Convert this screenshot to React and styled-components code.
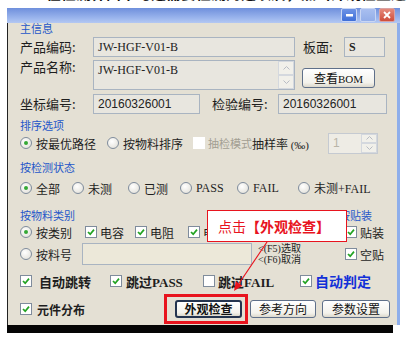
import styled, { createGlobalStyle } from 'styled-components';

const GlobalStyle = createGlobalStyle`
  html, body { margin: 0; padding: 0; background: #fff; }
  body { font-family: "Noto Sans CJK SC", "Liberation Sans", sans-serif; }
`;

const Page = styled.div`
  width: 406px;
  height: 339px;
  overflow: hidden;
  background: #fff;
`;

const TopStrip = styled.div`
  height: 8px;
  overflow: hidden;
  padding-left: 46px;
`;

const CutText = styled.div`
  margin-top: -15px;
  font-size: 15px;
  line-height: 16px;
  font-weight: 700;
  color: #111;
  white-space: nowrap;
`;

const Window = styled.div`
  margin-left: 7px;
  width: 393px;
`;

const TitleBar = styled.div`
  height: 15px;
  background: linear-gradient(#6e8fdc, #9db7ee 70%, #b4c8f2);
  display: flex;
  justify-content: flex-end;
  align-items: flex-start;
  gap: 3px;
  padding-right: 5px;
`;

const WinButton = styled.div`
  width: 16px;
  height: 14px;
  box-sizing: border-box;
  border-radius: 2px;
  border: 1px solid ${p => (p.$kind === 'close' ? '#d9a3a3' : '#c9d6f3')};
  background: ${p =>
    p.$kind === 'close'
      ? 'linear-gradient(#e58a7c, #cf4d3b)'
      : p.$kind === 'max'
      ? 'linear-gradient(#a9bff0, #93aee9)'
      : 'linear-gradient(#6d93e6, #3f6fd8)'};
  display: flex;
  align-items: center;
  justify-content: center;
`;

const Frame = styled.div`
  display: flex;
`;

const Panel = styled.div`
  position: relative;
  flex: 1;
  height: 302px;
  box-sizing: border-box;
  border-left: 1px solid #222;
  background: #e4e0d4;
  padding-left: 12px;
  display: flex;
  flex-direction: column;
  color: #1e1e1e;
`;

const RightEdge = styled.div`
  width: 3px;
  background: #8eaeea;
`;

const BottomBar = styled.div`
  width: 386px;
  height: 8px;
  background: #050505;
`;

const GroupLabel = styled.div`
  height: 11px;
  line-height: 11px;
  font-size: 11px;
  color: #2457c9;
  margin-top: ${p => p.$top || 0}px;
  margin-left: ${p => p.$left || 0}px;
  white-space: nowrap;
`;

const Row = styled.div`
  display: flex;
  align-items: ${p => p.$align || 'center'};
  height: ${p => p.$h}px;
  margin-top: ${p => p.$top || 0}px;
`;

const Label = styled.div`
  width: ${p => p.$w}px;
  margin-left: ${p => p.$left || 0}px;
  font-size: 13px;
  line-height: 14px;
  white-space: nowrap;
  flex: none;
`;

const Field = styled.div`
  width: ${p => p.$w}px;
  height: ${p => p.$h || 20}px;
  box-sizing: border-box;
  border: 1px solid #a9b4c1;
  background: ${p => p.$bg || '#e8e6df'};
  font-family: ${p => (p.$serif ? '"Liberation Serif", serif' : '"Liberation Sans", sans-serif')};
  font-weight: ${p => (p.$bold ? 700 : 400)};
  font-size: 12px;
  line-height: 14px;
  padding: 2px 0 0 4px;
  color: #222;
  position: relative;
  flex: none;
`;

const ScrollCol = styled.div`
  position: absolute;
  right: 0;
  top: 0;
  bottom: 0;
  width: 16px;
  display: flex;
  flex-direction: column;
`;

const ScrollBtn = styled.div`
  flex: 1;
  border: 1px solid #d4d8de;
  background: #f1f0ea;
  display: flex;
  align-items: center;
  justify-content: center;
`;

const Button = styled.button`
  width: ${p => p.$w}px;
  height: ${p => p.$h || 18}px;
  margin-left: ${p => p.$left || 0}px;
  margin-top: ${p => p.$top || 0}px;
  box-sizing: border-box;
  border: ${p => (p.$default ? '2px solid #24344f' : '1px solid #5f708a')};
  border-radius: 3px;
  background: linear-gradient(#ffffff, #f3f2ec 75%, #dcd8cc);
  font-family: "Noto Sans CJK SC", "Liberation Sans", sans-serif;
  font-size: 12px;
  font-weight: ${p => (p.$bold ? 700 : 400)};
  color: #111;
  padding: 0;
  line-height: 14px;
  flex: none;
`;

const Small = styled.span`
  font-family: "Liberation Serif", serif;
  font-size: 11px;
`;

const Option = styled.div`
  display: flex;
  align-items: center;
  width: ${p => (p.$w ? `${p.$w}px` : 'auto')};
  gap: ${p => p.$gap ?? 4}px;
  font-size: ${p => p.$size || 12}px;
  font-weight: ${p => (p.$bold ? 700 : 400)};
  color: ${p => p.$color || '#1e1e1e'};
  white-space: nowrap;
  flex: none;
`;

const Latin = styled.span`
  font-family: "Liberation Serif", serif;
  font-size: ${p => p.$size || 12}px;
`;

const RadioDot = styled.span`
  width: 12px;
  height: 12px;
  box-sizing: border-box;
  border-radius: 50%;
  border: 1px solid #7f8c9c;
  background: radial-gradient(circle at 40% 35%, #ffffff, #dedcd4);
  position: relative;
  flex: none;
  &::after {
    content: '';
    display: ${p => (p.$checked ? 'block' : 'none')};
    position: absolute;
    left: 3px;
    top: 3px;
    width: 4px;
    height: 4px;
    border-radius: 50%;
    background: #35a835;
  }
`;

const Box = styled.span`
  width: 12px;
  height: 12px;
  box-sizing: border-box;
  border: 1px solid ${p => (p.$disabled ? '#ffffff' : '#7f8c9c')};
  background: #fff;
  display: flex;
  align-items: center;
  justify-content: center;
  flex: none;
`;

const Spin = styled.div`
  width: 50px;
  height: 21px;
  box-sizing: border-box;
  border: 1px solid #c5cad1;
  background: #eeece5;
  position: relative;
  font: 12px "Liberation Sans", sans-serif;
  color: #b9b5a8;
  padding: 2px 0 0 4px;
  flex: none;
`;

const Hint = styled.div`
  margin-left: 6px;
  font-size: 10px;
  line-height: 10px;
  color: #1e1e1e;
  white-space: nowrap;
`;

const Material = styled.div`
  display: flex;
  margin-top: 15px;
`;

const Column = styled.div`
  display: flex;
  flex-direction: column;
  width: ${p => (p.$w ? `${p.$w}px` : 'auto')};
`;

const Callout = styled.div`
  position: absolute;
  left: 199px;
  top: 187px;
  width: 140px;
  height: 32px;
  box-sizing: border-box;
  border: 1px solid #e8141e;
  background: #fff;
  color: #e8141e;
  font-size: 14px;
  line-height: 30px;
  padding-left: 10px;
  white-space: nowrap;
`;

const Highlight = styled.div`
  position: absolute;
  left: 156px;
  top: 271px;
  width: 84px;
  height: 30px;
  box-sizing: border-box;
  border: 3px solid #e8141e;
`;

const ArrowSvg = styled.svg`
  position: absolute;
  left: 214px;
  top: 217px;
`;

function Radio({ checked }) {
  return <RadioDot $checked={checked} />;
}

function Check({ checked, disabled }) {
  return (
    <Box $disabled={disabled}>
      {checked && (
        <svg width="8" height="8" viewBox="0 0 8 8">
          <path d="M1 4 L3.2 6.2 L7 1.6" stroke="#22a322" strokeWidth="1.7" fill="none" />
        </svg>
      )}
    </Box>
  );
}

function Arrow({ up }) {
  return (
    <svg width="7" height="4" viewBox="0 0 7 4">
      <path d={up ? 'M0.5 3.5 L3.5 0.5 L6.5 3.5' : 'M0.5 0.5 L3.5 3.5 L6.5 0.5'} stroke="#b8bcc4" strokeWidth="1" fill="none" />
    </svg>
  );
}

export default function App() {
  return (
    <Page>
      <GlobalStyle />
      <TopStrip>
        <CutText>在检测界面中勾选需要检测的选项后，点击外观检查进行检测</CutText>
      </TopStrip>
      <Window>
        <TitleBar>
          <WinButton $kind="min">
            <svg width="7" height="3" viewBox="0 0 7 3"><rect width="7" height="2.5" fill="#fff" /></svg>
          </WinButton>
          <WinButton $kind="max" />
          <WinButton $kind="close">
            <svg width="8" height="8" viewBox="0 0 8 8">
              <path d="M1 1 L7 7 M7 1 L1 7" stroke="#fff" strokeWidth="1.8" />
            </svg>
          </WinButton>
        </TitleBar>
        <Frame>
          <Panel>
            <GroupLabel $top={0}>主信息</GroupLabel>

            <Row $h={20} $top={3}>
              <Label $w={73}>产品编码:</Label>
              <Field $w={202} $serif>JW-HGF-V01-B</Field>
              <Label $w={41} $left={8}>板面:</Label>
              <Field $w={41} $serif $bold>S</Field>
            </Row>

            <Row $h={30} $top={3} $align="flex-start">
              <Label $w={73}>产品名称:</Label>
              <Field $w={202} $h={30} $serif>
                JW-HGF-V01-B
                <ScrollCol>
                  <ScrollBtn><Arrow up /></ScrollBtn>
                  <ScrollBtn><Arrow /></ScrollBtn>
                </ScrollCol>
              </Field>
              <Button $w={73} $h={20} $left={7} $top={8}>
                查看<Small>BOM</Small>
              </Button>
            </Row>

            <Row $h={20} $top={4}>
              <Label $w={73}>坐标编号:</Label>
              <Field $w={107}>20160326001</Field>
              <Label $w={66} $left={12}>检验编号:</Label>
              <Field $w={109}>20160326001</Field>
            </Row>

            <GroupLabel $top={6}>排序选项</GroupLabel>
            <Row $h={22} $top={1}>
              <Option $w={87}><Radio checked />按最优路径</Option>
              <Option $w={86}><Radio />按物料排序</Option>
              <Option $w={59} $gap={3} $size={11} $color="#a29e92"><Check disabled />抽检模式</Option>
              <Option $w={76}><span>抽样率 <Latin $size={11}>(‰)</Latin></span></Option>
              <Spin>
                1
                <ScrollCol>
                  <ScrollBtn><Arrow up /></ScrollBtn>
                  <ScrollBtn><Arrow /></ScrollBtn>
                </ScrollCol>
              </Spin>
            </Row>

            <GroupLabel $top={8}>按检测状态</GroupLabel>
            <Row $h={14} $top={8}>
              <Option $w={52}><Radio checked />全部</Option>
              <Option $w={56}><Radio />未测</Option>
              <Option $w={52}><Radio />已测</Option>
              <Option $w={57}><Radio /><Latin>PASS</Latin></Option>
              <Option $w={61}><Radio /><Latin>FAIL</Latin></Option>
              <Option><Radio /><span>未测<Latin>+FAIL</Latin></span></Option>
            </Row>

            <Material>
              <Column $w={325}>
                <GroupLabel>按物料类别</GroupLabel>
                <Row $h={14} $top={4}>
                  <Option $w={65}><Radio checked />按类别</Option>
                  <Option $w={50} $gap={3}><Check checked />电容</Option>
                  <Option $w={53} $gap={3}><Check checked />电阻</Option>
                  <Option $w={50} $gap={3}><Check checked />电感</Option>
                </Row>
                <Row $h={22} $top={4}>
                  <Option $w={62}><Radio />按料号</Option>
                  <Field $w={170} $h={22} $bg="#ece8d9" />
                  <Hint>
                    <div><Latin $size={10}>&lt;(F5)</Latin>选取</div>
                    <div><Latin $size={10}>&lt;(F6)</Latin>取消</div>
                  </Hint>
                </Row>
              </Column>
              <Column>
                <GroupLabel $left={-6}>按贴装</GroupLabel>
                <Row $h={14} $top={4}>
                  <Option $gap={3}><Check checked />贴装</Option>
                </Row>
                <Row $h={22} $top={4}>
                  <Option $gap={3}><Check checked />空贴</Option>
                </Row>
              </Column>
            </Material>

            <Row $h={14} $top={9}>
              <Option $w={90} $gap={7} $bold $size={13}><Check checked />自动跳转</Option>
              <Option $w={93} $gap={4} $bold $size={13}><Check checked /><span>跳过<Latin $size={13}>PASS</Latin></span></Option>
              <Option $w={97} $gap={3} $bold $size={13}><Check /><span>跳过<Latin $size={13}>FAIL</Latin></span></Option>
              <Option $gap={3} $bold $size={14} $color="#1230d8"><Check checked />自动判定</Option>
            </Row>

            <Row $h={18} $top={12}>
              <Option $w={155} $gap={5} $bold $size={12}><Check checked />元件分布</Option>
              <Button $w={67} $default $bold>外观检查</Button>
              <Button $w={66} $left={8}>参考方向</Button>
              <Button $w={68} $left={6}>参数设置</Button>
            </Row>

            <Callout>点击<b>【外观检查】</b></Callout>
            <Highlight />
            <ArrowSvg width="50" height="56" viewBox="0 0 50 56">
              <line x1="45" y1="2" x2="17" y2="43.5" stroke="#e8141e" strokeWidth="1.2" />
              <polygon points="12,51 20.3,45.7 13.7,41.3" fill="#e8141e" />
            </ArrowSvg>
          </Panel>
          <RightEdge />
        </Frame>
        <BottomBar />
      </Window>
    </Page>
  );
}
